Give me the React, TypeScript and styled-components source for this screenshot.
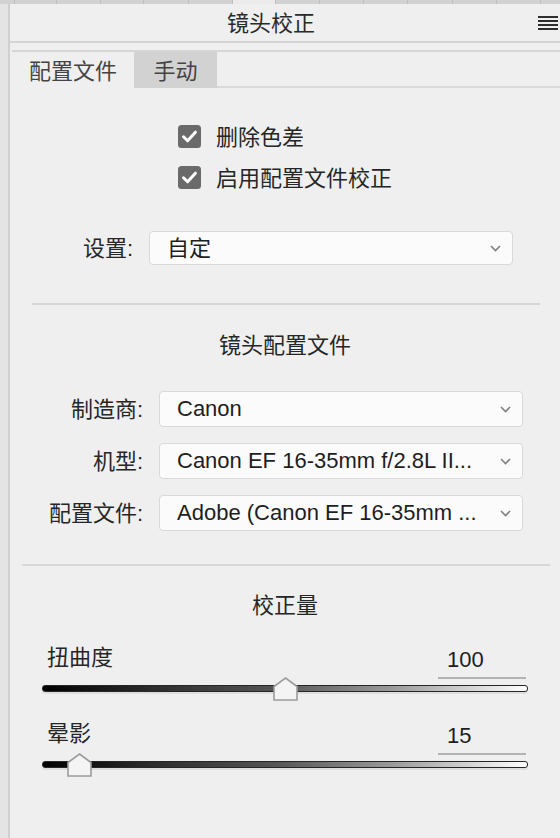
import React from 'react'
import styled, { createGlobalStyle } from 'styled-components'

const GlobalStyle = createGlobalStyle`
  html, body {
    margin: 0;
    padding: 0;
    background: #efefef;
  }
  body {
    font-family: "Liberation Sans", "Noto Sans CJK SC", sans-serif;
    color: #262626;
  }
`

const Page = styled.div`
  width: 560px;
  height: 838px;
  display: flex;
  flex-direction: column;
  overflow: hidden;
  background: #efefef;
`
const DockTabs = styled.div`
  display: flex;
  height: 4px;
  flex-shrink: 0;
  background: #d2d2d2;
`
const DockTab = styled.div<{ $w: number; $active?: boolean }>`
  width: ${(p) => p.$w}px;
  flex-shrink: 0;
  box-sizing: border-box;
  border-right: 1px solid #bfbfbf;
  background: ${(p) => (p.$active ? '#ebebeb' : 'transparent')};
`
const Body = styled.div`
  flex: 1;
  display: flex;
  min-height: 0;
`
const Gutter = styled.div`
  width: 8px;
  flex-shrink: 0;
  background: #e4e4e4;
  border-right: 2px solid #d0d0d0;
`
const Panel = styled.div`
  flex: 1;
  min-width: 0;
  display: flex;
  flex-direction: column;
`
const Header = styled.div`
  height: 37px;
  display: flex;
  align-items: center;
  border-bottom: 2px solid #d5d5d5;
`
const HeaderTitle = styled.div`
  flex: 1;
  padding-bottom: 4px;
  text-align: center;
  font-size: 22px;
  color: #2a2a2a;
`
const MenuIcon = styled.svg`
  width: 20px;
  height: 14px;
  margin: 0 2px 0 6px;
`
const TabBar = styled.div`
  display: flex;
  height: 36px;
  margin: 7px 0 0 2px;
  border-top: 2px solid #d6d6d6;
`
const Tab = styled.div<{ $active?: boolean }>`
  min-width: 83px;
  box-sizing: border-box;
  padding: 0 17px 3px;
  display: flex;
  align-items: center;
  justify-content: center;
  font-size: 22px;
  color: #444;
  background: ${(p) => (p.$active ? 'transparent' : '#d2d2d2')};
`
const TabFill = styled.div`
  flex: 1;
  border-bottom: 2px solid #dadada;
`
const Content = styled.div`
  display: flex;
  flex-direction: column;
`
const CheckGroup = styled.div`
  align-self: center;
  display: flex;
  flex-direction: column;
  gap: 18px;
  margin-top: 37px;
`
const CheckRow = styled.label`
  display: flex;
  align-items: center;
  gap: 15px;
  height: 23px;
`
const CheckText = styled.span`
  padding-bottom: 4px;
  font-size: 22px;
  color: #262626;
`
const FieldRow = styled.div<{ $top: number; $indent: number; $h: number }>`
  display: flex;
  align-items: center;
  gap: 16px;
  height: ${(p) => p.$h}px;
  margin-top: ${(p) => p.$top}px;
  padding-left: ${(p) => p.$indent}px;
`
const FieldLabel = styled.span<{ $w: number }>`
  width: ${(p) => p.$w}px;
  padding-bottom: 4px;
  text-align: right;
  font-size: 22px;
  color: #262626;
  white-space: nowrap;
`
const SelectBox = styled.div`
  width: 364px;
  height: 100%;
  box-sizing: border-box;
  display: flex;
  align-items: center;
  padding: 0 11px 0 17px;
  background: #fbfbfb;
  border: 1.5px solid #d9d9d9;
  border-radius: 4px;
  font-size: 22px;
  color: #1e1e1e;
`
const SelectText = styled.span<{ $cjk?: boolean }>`
  flex: 1;
  min-width: 0;
  padding-bottom: ${(p) => (p.$cjk ? 4 : 1)}px;
  white-space: nowrap;
  overflow: hidden;
  text-overflow: ellipsis;
`
const Chevron = styled.svg`
  width: 11px;
  height: 7px;
  flex-shrink: 0;
  margin-left: 8px;
`
const Divider = styled.div<{ $top: number; $left: number; $right: number }>`
  height: 2px;
  background: #d7d7d7;
  margin: ${(p) => p.$top}px ${(p) => p.$right}px 0 ${(p) => p.$left}px;
`
const SectionTitle = styled.div<{ $top: number }>`
  margin-top: ${(p) => p.$top}px;
  padding-bottom: 4px;
  line-height: 26px;
  text-align: center;
  font-size: 22px;
  color: #262626;
`
const SliderBlock = styled.div<{ $top: number }>`
  margin: ${(p) => p.$top}px 32px 0 32px;
`
const SliderHead = styled.div`
  display: flex;
  justify-content: space-between;
  align-items: flex-end;
  height: 34px;
  padding-left: 5px;
`
const SliderLabel = styled.span`
  padding-bottom: 8px;
  font-size: 22px;
  line-height: 26px;
  color: #262626;
`
const ValueBox = styled.div`
  width: 88px;
  box-sizing: border-box;
  padding: 0 0 4px 9px;
  margin-right: 2px;
  border-bottom: 2px solid #b3b3b3;
  font-size: 22px;
  line-height: 26px;
  color: #1e1e1e;
`
const Track = styled.div`
  position: relative;
  height: 7px;
  margin-top: 6px;
  box-sizing: border-box;
  border: 1.5px solid #262626;
  border-radius: 3px;
  background: linear-gradient(to right, #000 0%, #2b2b2b 22%, #555 48%, #9a9a9a 72%, #ffffff 100%);
  box-shadow: 0 2px 0 #dedede;
`
const Thumb = styled.svg`
  position: absolute;
  top: -9px;
  width: 25px;
  height: 24px;
  margin-left: -12.5px;
`

const CheckIcon = () => (
  <svg width="23" height="23" viewBox="0 0 23 23">
    <rect x="0" y="0" width="23" height="23" rx="3.5" fill="#6a6a6a" />
    <polyline points="5.5,11.8 9.6,15.8 17.4,7.2" fill="none" stroke="#fff" strokeWidth="3" strokeLinecap="round" strokeLinejoin="round" />
  </svg>
)

const Select = ({ value, cjk }: { value: string; cjk?: boolean }) => (
  <SelectBox>
    <SelectText $cjk={cjk}>{value}</SelectText>
    <Chevron viewBox="0 0 11 7">
      <polyline points="1,1 5.5,5.5 10,1" fill="none" stroke="#808080" strokeWidth="1.6" />
    </Chevron>
  </SelectBox>
)

const Slider = ({ label, value, top }: { label: string; value: number; top: number }) => (
  <SliderBlock $top={top}>
    <SliderHead>
      <SliderLabel>{label}</SliderLabel>
      <ValueBox>{value}</ValueBox>
    </SliderHead>
    <Track>
      <Thumb viewBox="0 0 25 24" style={{ left: `${(value / 200) * 100}%` }}>
        <polygon points="12.5,1 24,9.5 24,23 1,23 1,9.5" fill="#f4f4f4" stroke="#9c9c9c" strokeWidth="1.6" />
      </Thumb>
    </Track>
  </SliderBlock>
)

const dockWidths = [15, 42, 44, 43, 45, 44, 43, 44, 44, 44, 45, 44, 44, 44]

export default function App() {
  return (
    <>
      <GlobalStyle />
      <Page>
        <DockTabs>
          {dockWidths.map((w, i) => (
            <DockTab key={i} $w={w} $active={i === 6} />
          ))}
        </DockTabs>
        <Body>
          <Gutter />
          <Panel>
            <Header>
              <HeaderTitle>镜头校正</HeaderTitle>
              <MenuIcon viewBox="0 0 20 14">
                <rect x="0" y="0" width="20" height="2" fill="#2e2e2e" />
                <rect x="0" y="4" width="20" height="2" fill="#2e2e2e" />
                <rect x="0" y="8" width="20" height="2" fill="#2e2e2e" />
                <rect x="0" y="12" width="20" height="2" fill="#2e2e2e" />
              </MenuIcon>
            </Header>
            <TabBar>
              <Tab $active>配置文件</Tab>
              <Tab>手动</Tab>
              <TabFill />
            </TabBar>
            <Content>
              <CheckGroup>
                <CheckRow>
                  <CheckIcon />
                  <CheckText>删除色差</CheckText>
                </CheckRow>
                <CheckRow>
                  <CheckIcon />
                  <CheckText>启用配置文件校正</CheckText>
                </CheckRow>
              </CheckGroup>

              <FieldRow $top={42} $indent={51} $h={34}>
                <FieldLabel $w={72}>设置:</FieldLabel>
                <Select value="自定" cjk />
              </FieldRow>

              <Divider $top={38} $left={22} $right={20} />

              <SectionTitle $top={28}>镜头配置文件</SectionTitle>

              <FieldRow $top={28} $indent={21} $h={36}>
                <FieldLabel $w={112}>制造商:</FieldLabel>
                <Select value="Canon" />
              </FieldRow>
              <FieldRow $top={16} $indent={21} $h={36}>
                <FieldLabel $w={112}>机型:</FieldLabel>
                <Select value="Canon EF 16-35mm f/2.8L II..." />
              </FieldRow>
              <FieldRow $top={16} $indent={21} $h={36}>
                <FieldLabel $w={112}>配置文件:</FieldLabel>
                <Select value="Adobe (Canon EF 16-35mm ..." />
              </FieldRow>

              <Divider $top={33} $left={12} $right={10} />

              <SectionTitle $top={27}>校正量</SectionTitle>

              <Slider label="扭曲度" value={100} top={22} />
              <Slider label="晕影" value={15} top={29} />
            </Content>
          </Panel>
        </Body>
      </Page>
    </>
  )
}
